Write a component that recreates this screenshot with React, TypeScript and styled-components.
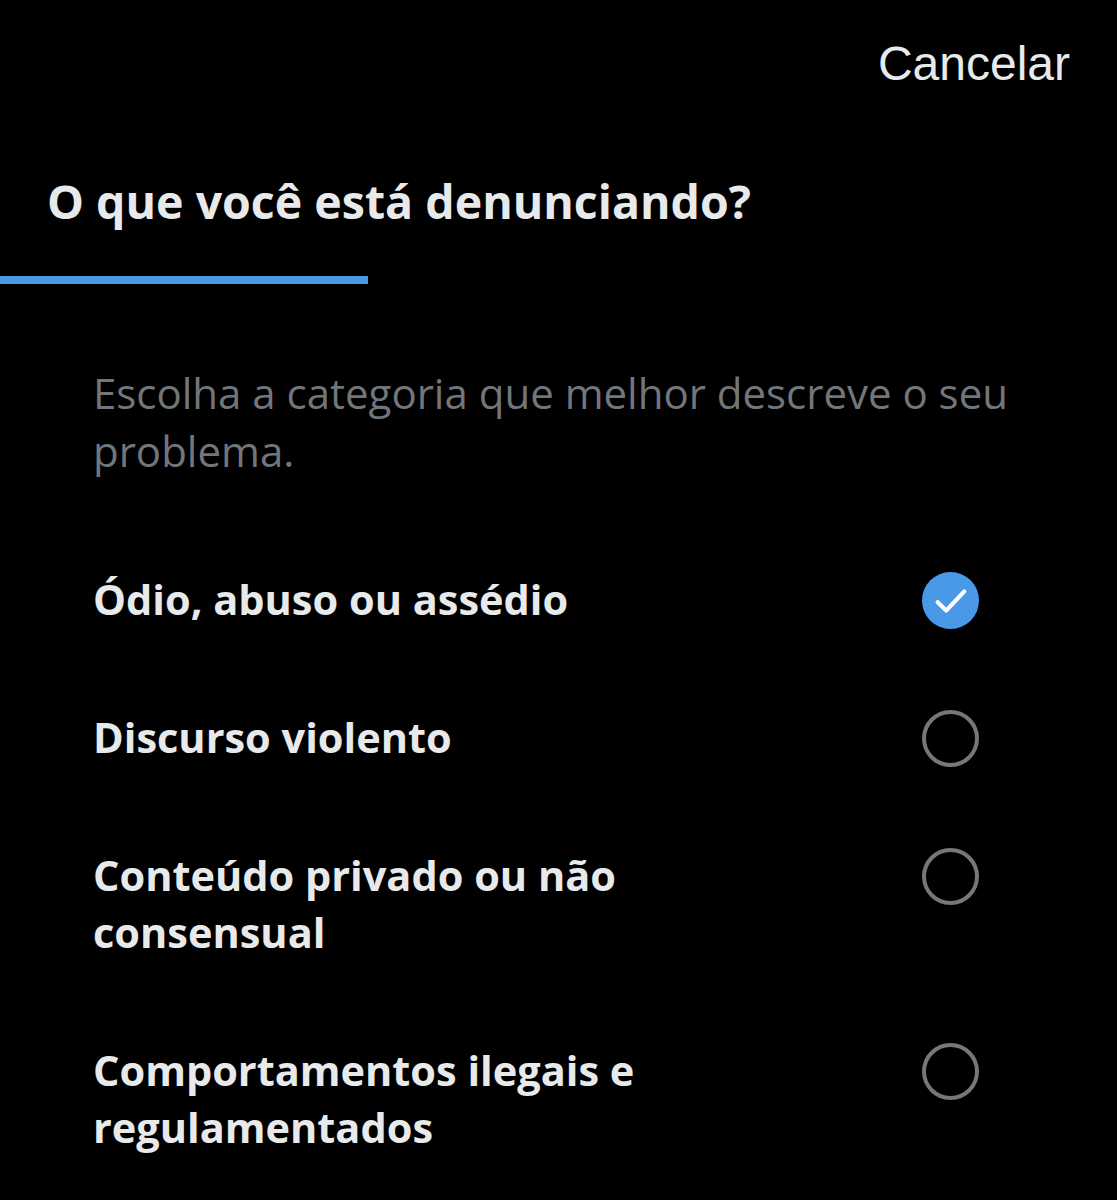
import styled, { createGlobalStyle } from "styled-components";

const GlobalStyle = createGlobalStyle`
  html, body {
    margin: 0;
    padding: 0;
    background: #000000;
  }
  body {
    font-family: "Open Sans", "Noto Sans", sans-serif;
    color: #e7e9ea;
  }
`;

interface Option {
  label: string;
  selected?: boolean;
}

const OPTIONS: Option[] = [
  { label: "Ódio, abuso ou assédio", selected: true },
  { label: "Discurso violento" },
  { label: "Conteúdo privado ou não consensual" },
  { label: "Comportamentos ilegais e regulamentados" },
];

function CheckIcon() {
  return (
    <svg width="50" height="50" viewBox="0 0 24 24" fill="none">
      <path
        d="M5.6 12.6l4.1 4 8.7-9.2"
        stroke="#ffffff"
        strokeWidth="2"
        strokeLinecap="round"
        strokeLinejoin="round"
      />
    </svg>
  );
}

export default function App() {
  return (
    <S.Page>
      <GlobalStyle />
      <S.Header>
        <S.CancelButton>Cancelar</S.CancelButton>
      </S.Header>

      <S.Title>O que você está denunciando?</S.Title>

      <S.ProgressTrack>
        <S.ProgressFill style={{ width: `${(368 / 1117) * 100}%` }} />
      </S.ProgressTrack>

      <S.Content>
        <S.Description>
          Escolha a categoria que melhor descreve o seu problema.
        </S.Description>

        <S.OptionList>
          {OPTIONS.map((option) => (
            <S.OptionRow key={option.label}>
              <S.OptionLabel>{option.label}</S.OptionLabel>
              <S.Radio $selected={!!option.selected}>
                {option.selected && <CheckIcon />}
              </S.Radio>
            </S.OptionRow>
          ))}
        </S.OptionList>
      </S.Content>
    </S.Page>
  );
}

const S = {
  Page: styled.div`
    width: 1117px;
    min-height: 1200px;
    background: #000000;
    overflow: hidden;
  `,

  Header: styled.div`
    display: flex;
    justify-content: flex-end;
    padding: 32px 47px 0 0;
    height: 64px;
  `,

  CancelButton: styled.button`
    background: none;
    border: none;
    padding: 0;
    font-family: "Liberation Sans", "Inter", sans-serif;
    font-size: 48px;
    font-weight: 400;
    color: #e7e9ea;
    line-height: 64px;
  `,

  Title: styled.h1`
    margin: 0;
    padding: 76px 0 0 47px;
    height: 78px;
    font-size: 46.5px;
    font-weight: 700;
    line-height: 58px;
    color: #e7e9ea;
  `,

  ProgressTrack: styled.div`
    height: 8px;
    margin-top: 26px;
    background: transparent;
  `,

  ProgressFill: styled.div`
    height: 100%;
    background: #4a99e9;
  `,

  Content: styled.div`
    padding: 80px 40px 0 93px;
  `,

  Description: styled.p`
    margin: 0;
    font-size: 42px;
    line-height: 58px;
    font-weight: 400;
    color: #71767b;
  `,

  OptionList: styled.div`
    display: flex;
    flex-direction: column;
    margin-top: 91px;
    padding-right: 98px;
  `,

  OptionRow: styled.div`
    display: flex;
    align-items: flex-start;
    justify-content: space-between;
    gap: 40px;
    padding-bottom: 81px;
  `,

  OptionLabel: styled.div`
    max-width: 580px;
    font-size: 41.5px;
    font-weight: 700;
    line-height: 57px;
    color: #e7e9ea;
  `,

  Radio: styled.div<{ $selected: boolean }>`
    flex-shrink: 0;
    box-sizing: border-box;
    width: 57px;
    height: 57px;
    margin: 1px 0 -1px;
    border-radius: 50%;
    display: flex;
    align-items: center;
    justify-content: center;
    background: ${({ $selected }) => ($selected ? "#4a99e9" : "transparent")};
    border: ${({ $selected }) => ($selected ? "none" : "4px solid #74777b")};
  `,
};
